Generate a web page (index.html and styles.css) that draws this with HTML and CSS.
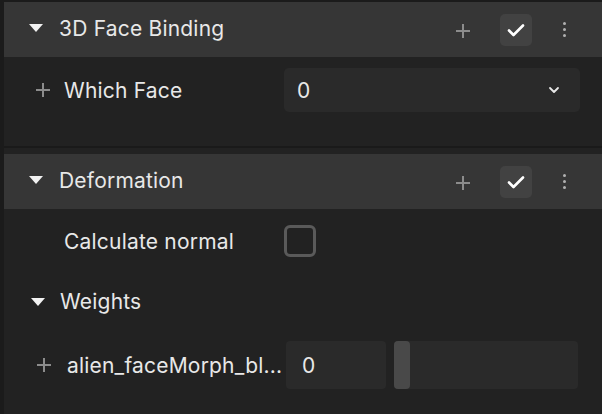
FILE: index.html
```html
<!DOCTYPE html>
<html lang="en">
<head>
    <meta charset="UTF-8">
    <title>Inspector</title>
    <link rel="stylesheet" href="styles.css">
</head>
<body>
    <div class="panel">
        <div class="section">
            <div class="section-header">
                <span class="caret"></span>
                <span class="section-title">3D Face Binding</span>
                <svg class="header-plus" width="16" height="16" viewBox="0 0 16 16"><path d="M8 1 V15 M1 8 H15" stroke="#8c8c8c" stroke-width="2"/></svg>
                <span class="toggle">
                    <svg width="18" height="14" viewBox="0 0 18 14"><path d="M2 7.5 L6.5 12 L16 2.5" fill="none" stroke="#fff" stroke-width="2.6" stroke-linecap="round" stroke-linejoin="round"/></svg>
                </span>
                <span class="dots"><i></i><i></i><i></i></span>
            </div>
            <div class="section-body first-body">
                <div class="row">
                    <svg class="row-plus" width="14" height="14" viewBox="0 0 14 14"><path d="M7 0 V14 M0 7 H14" stroke="#8c8c8c" stroke-width="2"/></svg>
                    <span class="label">Which Face</span>
                    <div class="select">
                        <span>0</span>
                        <svg width="12" height="8" viewBox="0 0 12 8"><path d="M2 2 L6 6 L10 2" fill="none" stroke="#e8e8e8" stroke-width="1.8" stroke-linecap="round" stroke-linejoin="round"/></svg>
                    </div>
                </div>
            </div>
        </div>

        <div class="divider"></div>

        <div class="section second">
            <div class="section-header">
                <span class="caret"></span>
                <span class="section-title">Deformation</span>
                <svg class="header-plus" width="16" height="16" viewBox="0 0 16 16"><path d="M8 1 V15 M1 8 H15" stroke="#8c8c8c" stroke-width="2"/></svg>
                <span class="toggle">
                    <svg width="18" height="14" viewBox="0 0 18 14"><path d="M2 7.5 L6.5 12 L16 2.5" fill="none" stroke="#fff" stroke-width="2.6" stroke-linecap="round" stroke-linejoin="round"/></svg>
                </span>
                <span class="dots"><i></i><i></i><i></i></span>
            </div>
            <div class="section-body">
                <div class="row check-row">
                    <span class="row-plus"></span>
                    <span class="label">Calculate normal</span>
                    <span class="checkbox"></span>
                </div>
                <div class="group-title">
                    <span class="caret"></span>
                    <span>Weights</span>
                </div>
                <div class="row weight-row">
                    <svg class="row-plus" width="14" height="14" viewBox="0 0 14 14"><path d="M7 0 V14 M0 7 H14" stroke="#8c8c8c" stroke-width="2"/></svg>
                    <span class="label clip">alien_faceMorph_bl...</span>
                    <div class="number">0</div>
                    <div class="slider"><span class="thumb"></span></div>
                </div>
            </div>
        </div>
    </div>
</body>
</html>
```

FILE: styles.css
```css
body {
    margin: 0;
    background-color: #1b1b1b;
    font-family: Inter, "Noto Sans", sans-serif;
    color: #e8e8e8;
    font-size: 21px;
    letter-spacing: 0.2px;
    height: 414px;
    overflow: hidden;
}
.panel {
    padding: 2px 0 0 4px;
}
.section {
    background-color: #222222;
}
.section.second {
    padding-top: 6px;
    height: 260px;
}
.divider {
    height: 2px;
    background-color: #1a1a1a;
}
.section-header {
    display: flex;
    align-items: center;
    height: 55px;
    background-color: #363636;
    padding-left: 25px;
    padding-bottom: 3px;
    box-sizing: border-box;
}
.caret {
    width: 0;
    height: 0;
    border-left: 7px solid transparent;
    border-right: 7px solid transparent;
    border-top: 8px solid #f2f2f2;
    margin-right: 16px;
}
.section-title {
    flex: 1;
}
.header-plus {
    margin-top: 5px;
    margin-right: 29px;
}
.toggle {
    width: 32px;
    height: 32px;
    border-radius: 5px;
    background-color: #424242;
    display: flex;
    align-items: center;
    justify-content: center;
    margin-right: 31px;
    margin-top: 3px;
}
.dots {
    display: flex;
    flex-direction: column;
    gap: 3px;
    margin-right: 36px;
    margin-top: 3px;
}
.dots i {
    width: 3px;
    height: 3px;
    border-radius: 50%;
    background-color: #b0b0b0;
}
.first-body {
    height: 89px;
    padding-top: 11px;
    box-sizing: border-box;
}
.row {
    display: flex;
    align-items: center;
    padding-left: 32px;
}
.row-plus {
    width: 14px;
    height: 14px;
    margin-right: 14px;
    flex-shrink: 0;
}
.label {
    width: 220px;
}
.select {
    width: 296px;
    height: 44px;
    background-color: #2a2a2a;
    border-radius: 5px;
    display: flex;
    align-items: center;
    justify-content: space-between;
    padding: 0 20px 0 13px;
    box-sizing: border-box;
}
.check-row {
    margin-top: 16px;
}
.checkbox {
    width: 26px;
    height: 26px;
    border: 3px solid #5a5a5a;
    border-radius: 6px;
}
.group-title {
    display: flex;
    align-items: center;
    padding-left: 27px;
    margin-top: 32px;
}
.group-title .caret {
    margin-right: 15px;
}
.weight-row {
    margin-top: 27px;
    padding-left: 33px;
}
.weight-row .row-plus {
    margin-right: 16px;
}
.clip {
    width: 217px;
    white-space: nowrap;
    margin-right: 2px;
}
.number {
    width: 100px;
    height: 48px;
    background-color: #2a2a2a;
    border-radius: 4px;
    display: flex;
    align-items: center;
    padding-left: 16px;
    box-sizing: border-box;
    margin-right: 8px;
}
.slider {
    width: 184px;
    height: 48px;
    background-color: #2a2a2a;
    border-radius: 4px;
    display: flex;
}
.thumb {
    width: 16px;
    background-color: #494949;
    border-radius: 4px;
}
```
